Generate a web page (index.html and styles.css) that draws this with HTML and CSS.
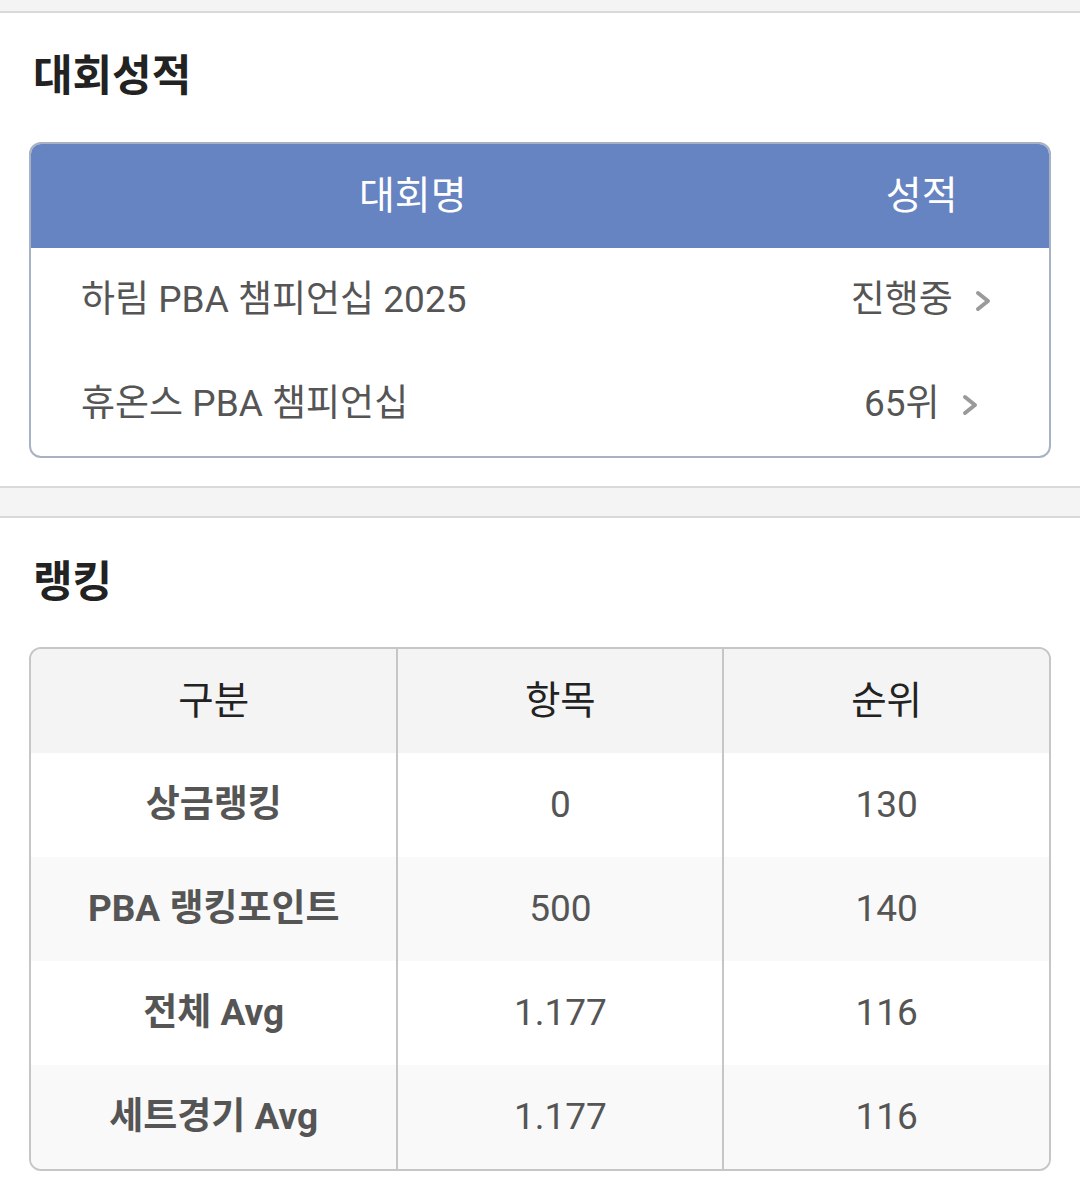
FILE: index.html
```html
<!DOCTYPE html>
<html lang="ko">
<head>
<meta charset="utf-8">
<link rel="stylesheet" href="styles.css">
</head>
<body>
<div class="band band-top"></div>
<section class="section">
  <h2 class="title">대회성적</h2>
  <div class="box box-blue">
    <table class="t1">
      <colgroup><col class="c-name"><col class="c-res"></colgroup>
      <thead>
        <tr><th>대회명</th><th>성적</th></tr>
      </thead>
      <tbody>
        <tr><td class="name">하림 PBA 챔피언십 2025</td><td class="res">진행중<svg class="chev" width="20" height="24" viewBox="0 0 20 24"><path d="M5 4 L15 12 L5 20" fill="none" stroke="#9a9a9a" stroke-width="4" stroke-linecap="round" stroke-linejoin="round"/></svg></td></tr>
        <tr><td class="name">휴온스 PBA 챔피언십</td><td class="res">65위<svg class="chev" width="20" height="24" viewBox="0 0 20 24"><path d="M5 4 L15 12 L5 20" fill="none" stroke="#9a9a9a" stroke-width="4" stroke-linecap="round" stroke-linejoin="round"/></svg></td></tr>
      </tbody>
    </table>
  </div>
</section>
<div class="band band-mid"></div>
<section class="section section-2">
  <h2 class="title">랭킹</h2>
  <div class="box box-gray">
    <table class="t2">
      <colgroup><col class="c1"><col class="c2"><col class="c3"></colgroup>
      <thead>
        <tr><th>구분</th><th>항목</th><th>순위</th></tr>
      </thead>
      <tbody>
        <tr><td class="lbl">상금랭킹</td><td>0</td><td>130</td></tr>
        <tr><td class="lbl">PBA 랭킹포인트</td><td>500</td><td>140</td></tr>
        <tr><td class="lbl">전체 Avg</td><td>1.177</td><td>116</td></tr>
        <tr><td class="lbl">세트경기 Avg</td><td>1.177</td><td>116</td></tr>
      </tbody>
    </table>
  </div>
</section>
</body>
</html>
```
FILE: styles.css
```css
html, body {
  margin: 0;
  padding: 0;
  background: #fff;
}
body {
  font-family: Roboto, "Noto Sans CJK KR", sans-serif;
  width: 1080px;
}
.band {
  background: #f4f4f4;
}
.band-top {
  height: 11px;
  border-bottom: 2px solid #d9d9d9;
}
.band-mid {
  height: 28px;
  border-top: 2px solid #d9d9d9;
  border-bottom: 2px solid #d9d9d9;
}
.section {
  padding: 39px 29px 28px 29px;
}
.section-2 {
  padding-top: 40px;
  padding-bottom: 12px;
}
.title {
  margin: 0 0 50px 4px;
  font-size: 43px;
  line-height: 40px;
  font-weight: 700;
  color: #222;
  font-family: "Noto Sans CJK KR", sans-serif;
}
.section-2 .title {
  margin-bottom: 49px;
}
.box {
  border-radius: 12px;
  overflow: hidden;
}
.box-blue {
  border: 2px solid #a9b2c3;
}
.box-gray {
  border: 2px solid #c6c6c6;
}
table {
  width: 100%;
  border-collapse: collapse;
  table-layout: fixed;
}
th, td {
  box-sizing: border-box;
  padding: 0;
  height: 104px;
  line-height: 1.2;
  vertical-align: middle;
}
.c-name { width: 75%; }
.c-res { width: 25%; }
.t1 thead th {
  background: #6683c2;
  color: #fff;
  font-weight: 400;
  font-size: 39px;
  text-align: center;
}
.t1 td {
  color: #555;
  font-size: 37px;
}
.t1 td.name {
  padding-left: 50px;
  text-align: left;
}
.t1 td.res {
  text-align: center;
  white-space: nowrap;
}
.chev {
  display: inline-block;
  vertical-align: middle;
  margin-left: 20px;
  position: relative;
  top: -1px;
}
.c1 { width: 36%; }
.c2 { width: 32%; }
.c3 { width: 32%; }
.t2 th {
  background: #f4f4f4;
  color: #222;
  font-weight: 400;
  font-size: 38.5px;
  text-align: center;
}
.t2 td {
  color: #555;
  font-size: 37px;
  text-align: center;
  background: #fff;
}
.t2 tbody tr:nth-child(even) td {
  background: #f9f9f9;
}
.t2 th + th,
.t2 td + td {
  border-left: 2px solid #c6c6c6;
}
.t2 td.lbl {
  font-weight: 700;
}
```
